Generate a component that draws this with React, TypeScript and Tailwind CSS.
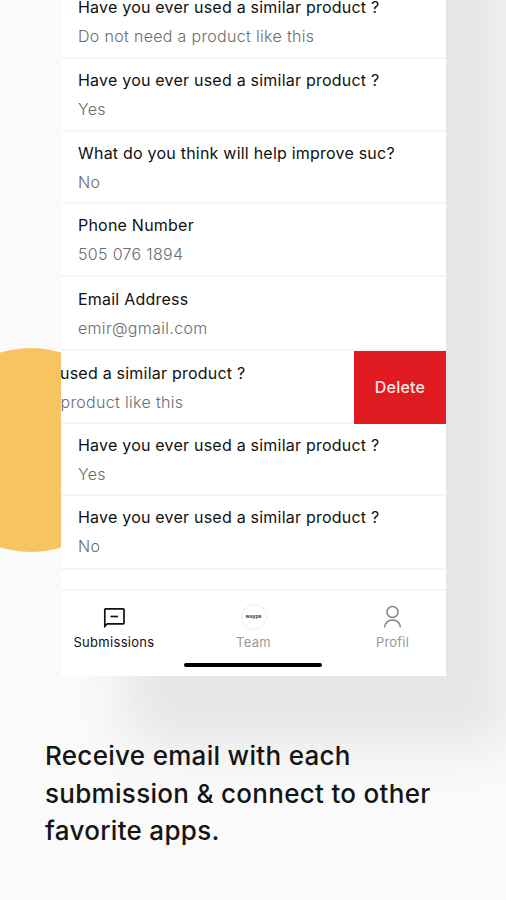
import clsx from "clsx";

interface Submission {
  question: string;
  answer: string;
  height: string;
  swiped?: boolean;
}

const submissions: Submission[] = [
  { question: "Have you ever used a similar product ?", answer: "Do not need a product like this", height: "h-[73px]" },
  { question: "Have you ever used a similar product ?", answer: "Yes", height: "h-[73px]" },
  { question: "What do you think will help improve suc?", answer: "No", height: "h-[72px]" },
  { question: "Phone Number", answer: "505 076 1894", height: "h-[73px]" },
  { question: "Email Address", answer: "emir@gmail.com", height: "h-[74px] pt-px" },
  { question: "Have you ever used a similar product ?", answer: "Do not need a product like this", height: "h-[73px]", swiped: true },
  { question: "Have you ever used a similar product ?", answer: "Yes", height: "h-[72px]" },
  { question: "Have you ever used a similar product ?", answer: "No", height: "h-[74px]" },
];

function SubmissionRow({ question, answer, height, swiped }: Submission) {
  return (
    <div className={clsx("flex flex-none border-b-2 border-[#f5f5f5]", height)}>
      <div className={clsx("min-w-0 flex-1", swiped && "-ml-[2px] overflow-hidden")}>
        <div className={clsx("pl-[17px] whitespace-nowrap", swiped ? "-ml-[132px] pt-[12px]" : "pt-[11px]")}>
          <p className="text-[16px] leading-[20px] tracking-[0.22px] text-[#111]">{question}</p>
          <p
            className={clsx(
              "mt-[9px] text-[16px] leading-[20px] font-light tracking-[0.32px] text-[#6c6c6c]",
              swiped && "pl-[3px]",
            )}
          >
            {answer}
          </p>
        </div>
      </div>
      {swiped && (
        <button
          type="button"
          className="flex h-[73px] w-[92px] flex-none items-center justify-center bg-[#df1b21] pb-[2px] text-[16px] font-medium tracking-[0.2px] text-[#ffe9e9]"
        >
          Delete
        </button>
      )}
    </div>
  );
}

function MessageIcon() {
  return (
    <svg width="24" height="24" viewBox="0 0 24 24" fill="none" stroke="#111" strokeWidth="1.7" aria-hidden="true">
      <path d="M2.800 21.200V4.600a.8.8 0 0 1 .8-.8h17.600a.8.8 0 0 1 .8.8v13.400a.8.8 0 0 1-.8.8H5.200Z" />
      <path d="M8.500 11.500h7.500" />
    </svg>
  );
}

function ProfileIcon() {
  return (
    <svg width="24" height="24" viewBox="0 0 24 24" fill="none" stroke="#858585" strokeWidth="1.5" aria-hidden="true">
      <circle cx="11.500" cy="7" r="5.500" />
      <path d="M3.500 22.500c.8-4.800 4-7.500 8-7.500s7.200 2.700 8 7.500" />
    </svg>
  );
}

function TabBar() {
  return (
    <nav className="relative flex h-[87px] flex-none justify-between border-t-2 border-[#f5f5f5] bg-white text-[13px] leading-[18px] text-[#999]">
      <div className="flex w-[106px] flex-col items-center pt-[14px]">
        <MessageIcon />
        <span className="mt-[4px] tracking-[0.3px] text-[#111]">Submissions</span>
      </div>
      <div className="flex w-[106px] flex-col items-center pt-[13px]">
        <span className="flex h-[26px] w-[26px] items-center justify-center rounded-full border border-[#eee] pb-px text-[5px] leading-none font-bold text-[#444]">
          waype
        </span>
        <span className="mt-[3px] tracking-[0.3px]">Team</span>
      </div>
      <div className="flex w-[106px] flex-col items-center pt-[14px]">
        <ProfileIcon />
        <span className="mt-[4px] pr-px tracking-[0.2px]">Profil</span>
      </div>
      {/* Home indicator */}
      <span className="absolute bottom-[9px] left-[123px] h-[4px] w-[138px] rounded-full bg-black" />
    </nav>
  );
}

export default function App() {
  return (
    <main className="relative isolate h-[900px] w-[506px] overflow-hidden bg-[#fafafa] font-['Inter',sans-serif]">
      <div className="absolute top-[348px] -left-[71px] -z-10 h-[204px] w-[204px] rounded-full bg-[#f8c462]" />

      {/* The screen runs past the top edge, so its shadow does too */}
      <section className="-mt-[200px] ml-[61px] flex h-[876px] w-[385px] flex-col justify-end bg-white shadow-[65px_70px_50px_0_#e6e6e6]">
        {submissions.map((submission, index) => (
          <SubmissionRow key={index} {...submission} />
        ))}
        <div className="h-[19px] flex-none" />
        <TabBar />
      </section>

      <h1 className="relative mt-[61px] ml-[45px] text-[26px] leading-[37.5px] font-medium tracking-[0.3px] text-[#151515]">
        Receive email with each
        <br />
        submission &amp; connect to other
        <br />
        favorite apps.
      </h1>
    </main>
  );
}
